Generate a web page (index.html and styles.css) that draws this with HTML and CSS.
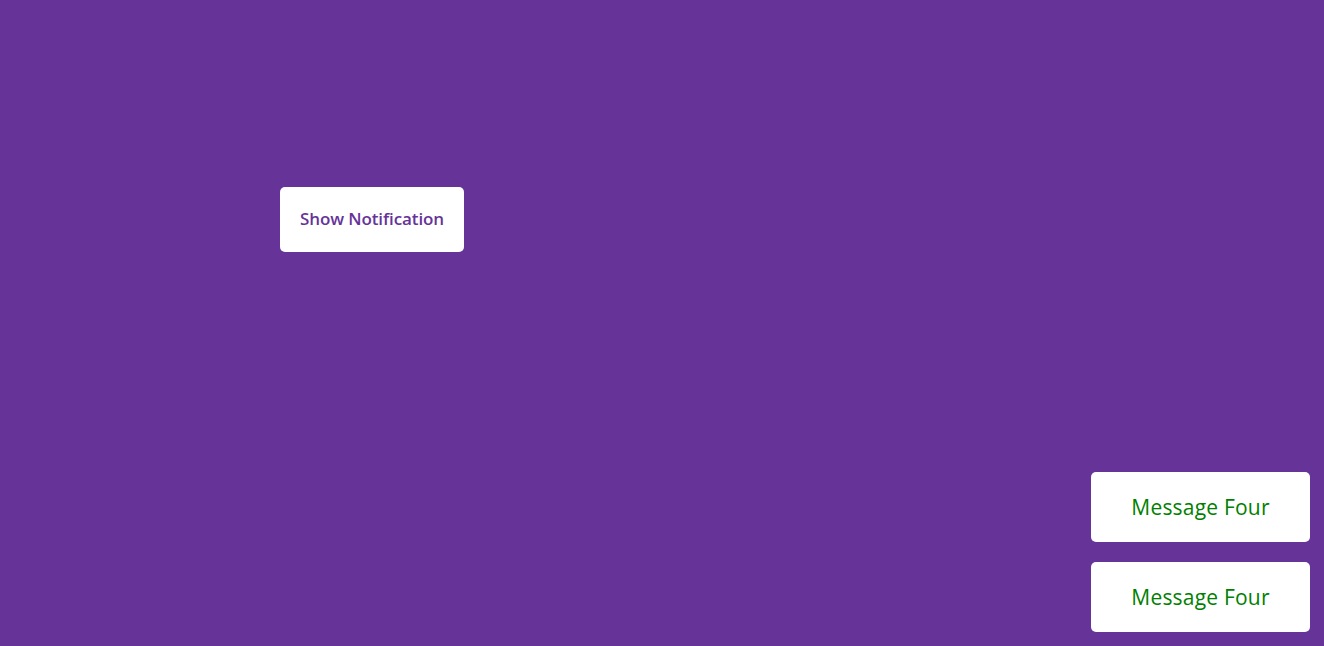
FILE: index.html
```html
<!DOCTYPE html>
<html lang="en">
<head>
<meta charset="UTF-8">
<title>Toast Notification</title>
<link rel="stylesheet" href="styles.css">
</head>
<body>
  <main class="stage">
    <button class="show-btn" type="button">Show Notification</button>
  </main>
  <div class="toast-box">
    <div class="toast">Message Four</div>
    <div class="toast">Message Four</div>
  </div>
</body>
</html>
```
FILE: styles.css
```css
* {
  margin: 0;
  padding: 0;
  box-sizing: border-box;
}
html, body {
  height: 100%;
}
body {
  background: #663399;
  font-family: "Open Sans", "Noto Sans", sans-serif;
  overflow: hidden;
}
.stage {
  padding: 187px 0 0 280px;
}
.show-btn {
  width: 184px;
  height: 65px;
  padding-bottom: 2px;
  background: #fff;
  border: none;
  border-radius: 5px;
  color: #663399;
  font-family: "Open Sans", "Noto Sans", sans-serif;
  font-size: 17px;
  font-weight: 600;
  letter-spacing: -0.1px;
  cursor: pointer;
}
.toast-box {
  position: absolute;
  right: 14px;
  bottom: 14px;
  display: flex;
  flex-direction: column;
  gap: 20px;
}
.toast {
  width: 219px;
  height: 70px;
  background: #fff;
  border-radius: 5px;
  color: #008000;
  font-size: 21px;
  letter-spacing: 0.2px;
  display: flex;
  align-items: center;
  justify-content: center;
}
```
